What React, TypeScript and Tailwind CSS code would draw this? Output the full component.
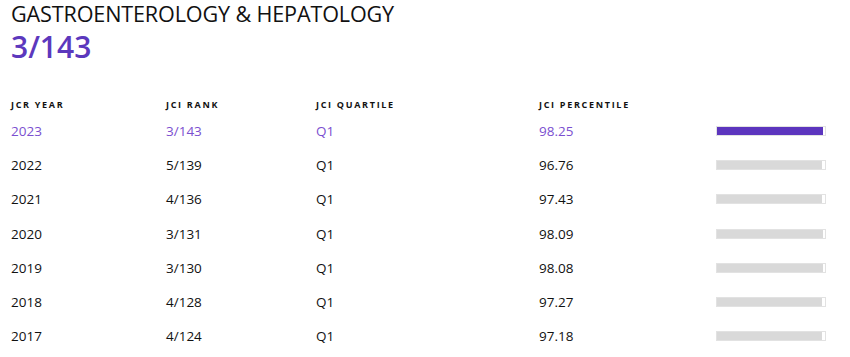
const rows = [
  { year: 2023, rank: '3/143', quartile: 'Q1', percentile: 98.25 },
  { year: 2022, rank: '5/139', quartile: 'Q1', percentile: 96.76 },
  { year: 2021, rank: '4/136', quartile: 'Q1', percentile: 97.43 },
  { year: 2020, rank: '3/131', quartile: 'Q1', percentile: 98.09 },
  { year: 2019, rank: '3/130', quartile: 'Q1', percentile: 98.08 },
  { year: 2018, rank: '4/128', quartile: 'Q1', percentile: 97.27 },
  { year: 2017, rank: '4/124', quartile: 'Q1', percentile: 97.18 },
]

const cols = 'grid grid-cols-[155px_150px_223px_177px_110px] items-center'

export default function App() {
  return (
    <div className="w-[850px] h-[357px] bg-white pl-[11px] pt-[1px] font-['Open_Sans',sans-serif] text-[#111]">
      <h2 className="text-[21.6px] leading-[26px] tracking-[-0.15px] uppercase">Gastroenterology &amp; Hepatology</h2>
      <div className="text-[30px] leading-[40px] font-semibold text-[#5c38bd]">3/143</div>

      <div className="mt-[30px]">
        <div className={`${cols} h-[16px] text-[9px] font-bold tracking-[1.7px] uppercase`}>
          <span>JCR Year</span>
          <span>JCI Rank</span>
          <span>JCI Quartile</span>
          <span>JCI Percentile</span>
          <span />
        </div>
        <div className="mt-[1px]">
          {rows.map((r, i) => {
            const current = i === 0
            return (
              <div
                key={r.year}
                className={`${cols} h-[34.2px] text-[13.5px] ${current ? 'text-[#7b4fd0]' : 'text-[#111]'}`}
              >
                <span>{r.year}</span>
                <span>{r.rank}</span>
                <span>{r.quartile}</span>
                <span>{r.percentile.toFixed(2)}</span>
                <div className="h-[10px] border border-[#e2e2e2] bg-white">
                  <div
                    className={current ? 'h-full bg-[#5c35be]' : 'h-full bg-[#d9d9d9]'}
                    style={{ width: `${r.percentile}%` }}
                  />
                </div>
              </div>
            )
          })}
        </div>
      </div>
    </div>
  )
}
